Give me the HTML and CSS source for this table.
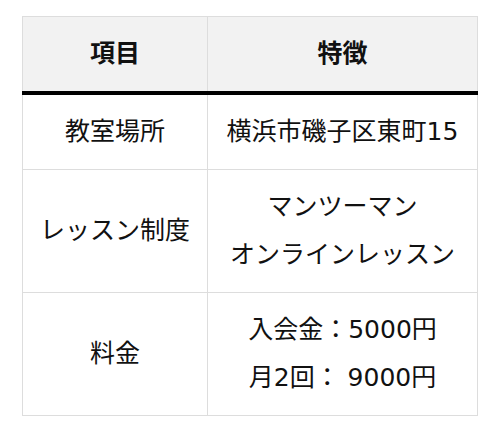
FILE: index.html
```html
<!DOCTYPE html>
<html lang="ja">
<head>
<meta charset="utf-8">
<title>教室案内</title>
<link rel="stylesheet" href="styles.css">
</head>
<body>
<div class="wrap">
  <table class="info">
    <colgroup>
      <col class="col-item">
      <col class="col-feat">
    </colgroup>
    <thead>
      <tr><th>項目</th><th>特徴</th></tr>
    </thead>
    <tbody>
      <tr><td>教室場所</td><td>横浜市磯子区東町15</td></tr>
      <tr><td>レッスン制度</td><td>マンツーマン<br>オンラインレッスン</td></tr>
      <tr><td>料金</td><td>入会金：5000円<br>月2回： 9000円</td></tr>
    </tbody>
  </table>
</div>
</body>
</html>
```
FILE: styles.css
```css
html, body {
  margin: 0;
  padding: 0;
  background: #fff;
}
.wrap {
  padding: 16px 14px 0 22px;
}
.info {
  width: 100%;
  border-collapse: collapse;
  table-layout: fixed;
  font-family: "DejaVu Sans", "Noto Sans CJK JP", sans-serif;
  font-size: 25px;
  line-height: 48px;
  color: #111;
}
.col-item { width: 185px; }
.info th, .info td {
  border: 1px solid #dddddd;
  padding: 13px 2px;
  text-align: center;
  vertical-align: middle;
}
.info th {
  background: #f2f2f2;
  font-weight: bold;
  border-bottom: 4px solid #000;
}
```
